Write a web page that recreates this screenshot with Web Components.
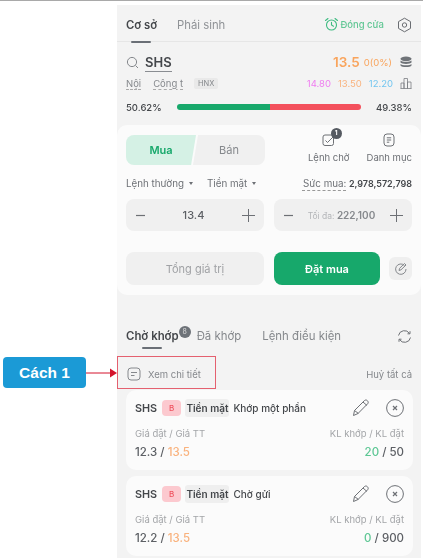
<!DOCTYPE html>
<html>
<head>
<meta charset="utf-8">
<style>
    html, body { margin: 0; padding: 0; background: #fff; }
    body { width: 423px; height: 558px; overflow: hidden; font-family: Inter, "Noto Sans", sans-serif; }
</style>
</head>
<body>
<trade-screen>
    <market-header></market-header>
    <order-form></order-form>
    <order-tabs></order-tabs>
    <order-card status="Khớp một phần" price="12.3" filled="20" total="50"></order-card>
    <order-card status="Chờ gửi" price="12.2" filled="0" total="900"></order-card>
</trade-screen>
<callout-label></callout-label>

<script>
class TradeScreen extends HTMLElement {
    constructor() {
        super()
        this.attachShadow({ mode: 'open' })
    }

    connectedCallback() {
        this.shadowRoot.innerHTML = `
            <style>
                :host {
                    display: block;
                    box-sizing: border-box;
                    width: 423px;
                    height: 558px;
                    overflow: hidden;
                    border-top: 1px solid #a9a9a9;
                    padding: 4px 2px 0 117px;
                }
                .panel {
                    display: flex;
                    flex-direction: column;
                    height: 560px;
                    background: #f3f3f3;
                    color: #44474b;
                    filter: blur(0.45px);
                }
            </style>
            <div class="panel"><slot></slot></div>
        `
    }
}

class MarketHeader extends HTMLElement {
    constructor() {
        super()
        this.attachShadow({ mode: 'open' })
    }

    connectedCallback() {
        this.shadowRoot.innerHTML = `
            <style>
                :host { display: block; height: 120px; font-size: 9px; }
                .tabs {
                    display: flex;
                    align-items: center;
                    gap: 20px;
                    box-sizing: border-box;
                    height: 37px;
                    padding: 3px 9px 0;
                    border-bottom: 1px solid #e6e6e6;
                    font-size: 11.3px;
                }
                .tab { position: relative; color: #8f9296; }
                .tab.on { color: #44474b; font-weight: 600; }
                .tab.on::after {
                    content: '';
                    position: absolute;
                    left: 5px;
                    bottom: -11px;
                    width: 20px;
                    height: 2px;
                    border-radius: 1px;
                    background: #6a6f76;
                }
                .closed {
                    display: flex;
                    align-items: center;
                    gap: 1px;
                    margin-left: auto;
                    color: #62c795;
                    font-size: 9.5px;
                    font-weight: 500;
                }
                .row {
                    display: flex;
                    align-items: center;
                    padding: 0 9px;
                }
                .symbol { height: 30px; margin-top: 5px; }
                .symbol b {
                    margin-left: 6px;
                    font-size: 13px;
                    font-weight: 600;
                    line-height: 18px;
                    border-bottom: 1px solid #8a8d92;
                }
                .last { margin-left: auto; color: #f9a45c; font-size: 13.5px; font-weight: 600; }
                .chg { margin: 0 8px 0 4px; color: #f9a45c; font-size: 9.5px; }
                .info { height: 12px; color: #85888c; font-size: 9.5px; }
                .info u { text-decoration: underline dashed #aaa; text-underline-offset: 2px; }
                .info .gap { width: 12px; }
                .hnx {
                    margin-left: 11px;
                    padding: 1px 4px;
                    border-radius: 2px;
                    background: #e9e9e9;
                    font-size: 7.5px;
                }
                .ceil { margin-left: auto; color: #ef7bf0; }
                .ref { margin: 0 7px; color: #f9b27d; }
                .floor { margin-right: 7px; color: #71c5f0; }
                .ratio { height: 16px; margin-top: 10px; font-size: 9.5px; font-weight: 500; }
                .bar {
                    display: flex;
                    flex: 1;
                    height: 6px;
                    margin: 0 15px;
                    overflow: hidden;
                    border-radius: 3px;
                }
                .buy { width: 50.62%; background: #17a86b; }
                .sell { flex: 1; background: #f3505c; }
            </style>
            <div class="tabs">
                <span class="tab on">Cơ sở</span>
                <span class="tab">Phái sinh</span>
                <span class="closed">
                    <svg width="15" height="15" viewBox="0 0 15 15" fill="none" stroke="#3dbb80" stroke-width="1.1">
                        <circle cx="7.5" cy="8" r="5"/>
                        <path d="M7.5 5.2V8l2 1.2M1.5 3.5l2.5-2M13.5 3.5l-2.5-2" stroke-linecap="round"/>
                    </svg>
                    Đóng cửa
                </span>
                <svg style="margin-left:-7px" width="15" height="16" viewBox="0 0 15 16" fill="none" stroke="#6a6d72" stroke-width="1">
                    <path d="M7.5 1.2l6 3.4v6.8l-6 3.4-6-3.4V4.6z"/>
                    <circle cx="7.5" cy="8" r="2.2"/>
                </svg>
            </div>
            <div class="row symbol">
                <svg width="13" height="13" viewBox="0 0 13 13" fill="none" stroke="#85888c" stroke-width="1">
                    <circle cx="6" cy="6" r="4.6"/><path d="M9.5 9.5l2.5 2.5"/>
                </svg>
                <b>SHS</b>
                <span class="last">13.5</span>
                <span class="chg">0(0%)</span>
                <svg width="12" height="12" viewBox="0 0 12 12" fill="#6f7378">
                    <ellipse cx="6" cy="2.8" rx="5.5" ry="2.3"/>
                    <path d="M.5 4.4c1 1.7 10 1.7 11 0v2.2c-1 1.8-10 1.8-11 0zM.5 8c1 1.7 10 1.7 11 0v1.5c-1 2-10 2-11 0z"/>
                </svg>
            </div>
            <div class="row info">
                <u>Nội</u><span class="gap"></span><u>Công t</u>
                <span class="hnx">HNX</span>
                <span class="ceil">14.80</span>
                <span class="ref">13.50</span>
                <span class="floor">12.20</span>
                <svg width="12" height="12" viewBox="0 0 12 12" fill="none" stroke="#7b7e83" stroke-width=".8">
                    <path d="M.5 11.5h11M1 11.5V6h3v5.5M4 11.5V1.5h3.5v10M7.5 11.5V5H11v6.5"/>
                </svg>
            </div>
            <div class="row ratio">
                <span>50.62%</span>
                <span class="bar"><span class="buy"></span><span class="sell"></span></span>
                <span>49.38%</span>
            </div>
        `
    }
}

class OrderForm extends HTMLElement {
    constructor() {
        super()
        this.attachShadow({ mode: 'open' })
    }

    connectedCallback() {
        this.shadowRoot.innerHTML = `
            <style>
                :host {
                    display: flex;
                    flex-direction: column;
                    box-sizing: border-box;
                    height: 170px;
                    padding: 10px 9px 0;
                    border-radius: 10px;
                    background: #fbfbfb;
                    font-size: 9px;
                }
                .top { display: flex; height: 38px; }
                .switch { display: flex; width: 139px; height: 30px; }
                .switch span {
                    display: flex;
                    align-items: center;
                    justify-content: center;
                    font-size: 11px;
                }
                .mua {
                    width: 70px;
                    border-radius: 8px 0 0 8px;
                    background: #d5f1e5;
                    color: #17a86b;
                    font-weight: 600;
                    clip-path: polygon(0 0, 100% 0, 93% 100%, 0 100%);
                }
                .ban {
                    flex: 1;
                    margin-left: -3px;
                    border-radius: 0 8px 8px 0;
                    background: #f0f0f0;
                    color: #85888c;
                    clip-path: polygon(7% 0, 100% 0, 100% 100%, 0 100%);
                }
                .links { display: flex; gap: 17px; margin-left: auto; margin-top: -2px; }
                .link {
                    position: relative;
                    display: flex;
                    flex-direction: column;
                    align-items: center;
                    gap: 5px;
                    color: #6d7075;
                    font-size: 9.5px;
                }
                .badge {
                    position: absolute;
                    top: -5px;
                    right: 8px;
                    width: 11px;
                    height: 11px;
                    border-radius: 50%;
                    background: #555a61;
                    color: #fff;
                    font-size: 6.5px;
                    font-weight: 700;
                    line-height: 11px;
                    text-align: center;
                }
                .options {
                    display: flex;
                    align-items: center;
                    gap: 14px;
                    height: 16px;
                    margin-top: 2px;
                    color: #6d7075;
                    font-size: 9.8px;
                }
                .options i {
                    display: inline-block;
                    margin-left: 5px;
                    border: 2.5px solid transparent;
                    border-top: 3px solid #6d7075;
                    border-bottom: 0;
                    vertical-align: middle;
                }
                .power { margin-left: auto; font-size: 9px; white-space: nowrap; }
                .power u { font-size: 9.8px; text-decoration: underline dashed #999; text-underline-offset: 3px; }
                .power b { color: #44474b; font-weight: 600; }
                .inputs, .submit { display: grid; grid-template-columns: 138px 1fr; gap: 10px; }
                .inputs { margin-top: 8px; }
                .stepper {
                    display: flex;
                    align-items: center;
                    justify-content: space-between;
                    box-sizing: border-box;
                    height: 32px;
                    padding: 0 9px 0 10px;
                    border-radius: 8px;
                    background: #f0f0f0;
                    color: #5d6065;
                    font-size: 11px;
                    font-weight: 500;
                }
                .stepper svg { flex: none; }
                .hint { color: #b3b5b8; font-size: 8.5px; font-weight: 400; }
                .hint b { color: #85888c; font-size: 10px; font-weight: 600; }
                .submit { margin-top: 21px; }
                .total, .place {
                    display: flex;
                    align-items: center;
                    justify-content: center;
                    height: 33px;
                    border-radius: 8px;
                    font-size: 11px;
                }
                .total { background: #f0f0f0; color: #a0a2a5; }
                .actions { display: flex; justify-content: space-between; align-items: flex-start; }
                .place { width: 106px; background: #17a86b; color: #fff; font-weight: 600; }
                .edit {
                    display: flex;
                    align-items: center;
                    justify-content: center;
                    width: 23px;
                    height: 23px;
                    margin-top: 5px;
                    border-radius: 6px;
                    background: #efefef;
                }
            </style>
            <div class="top">
                <div class="switch"><span class="mua">Mua</span><span class="ban">Bán</span></div>
                <div class="links">
                    <div class="link">
                        <svg width="14" height="14" viewBox="0 0 14 14" fill="none" stroke="#6d7075" stroke-width="1">
                            <rect x="1" y="2" width="10.5" height="10.5" rx="2"/>
                            <path d="M3.5 7.5l2 2L11 4"/>
                        </svg>
                        <span class="badge">1</span>
                        <span>Lệnh chờ</span>
                    </div>
                    <div class="link">
                        <svg width="14" height="14" viewBox="0 0 14 14" fill="none" stroke="#6d7075" stroke-width="1">
                            <rect x="2" y="1" width="10" height="12" rx="3"/>
                            <path d="M4.8 4.8h4.4M4.8 7h4.4M4.8 9.2h2.5"/>
                        </svg>
                        <span>Danh mục</span>
                    </div>
                </div>
            </div>
            <div class="options">
                <span>Lệnh thường<i></i></span>
                <span>Tiền mặt<i></i></span>
                <span class="power"><u>Sức mua:</u> <b>2,978,572,798</b></span>
            </div>
            <div class="inputs">
                <div class="stepper">
                    <svg width="9" height="9" viewBox="0 0 9 9" stroke="#6d7075" stroke-width="1.2"><path d="M0 4.5h9"/></svg>
                    <span>13.4</span>
                    <svg width="13" height="13" viewBox="0 0 13 13" stroke="#6d7075" stroke-width="1"><path d="M0 6.5h13M6.5 0v13"/></svg>
                </div>
                <div class="stepper">
                    <svg width="9" height="9" viewBox="0 0 9 9" stroke="#6d7075" stroke-width="1.2"><path d="M0 4.5h9"/></svg>
                    <span class="hint">Tối đa: <b>222,100</b></span>
                    <svg width="13" height="13" viewBox="0 0 13 13" stroke="#6d7075" stroke-width="1"><path d="M0 6.5h13M6.5 0v13"/></svg>
                </div>
            </div>
            <div class="submit">
                <div class="total">Tổng giá trị</div>
                <div class="actions">
                    <div class="place">Đặt mua</div>
                    <div class="edit">
                        <svg width="13" height="13" viewBox="0 0 13 13" fill="none" stroke="#85888c" stroke-width="1">
                            <path d="M10.5 3.5A5.2 5.2 0 1 0 12 7M5 8.5l.6-2.2L10.5 1.5l1.5 1.5-5 4.8z"/>
                        </svg>
                    </div>
                </div>
            </div>
        `
    }
}

class OrderTabs extends HTMLElement {
    constructor() {
        super()
        this.attachShadow({ mode: 'open' })
    }

    connectedCallback() {
        this.shadowRoot.innerHTML = `
            <style>
                :host { display: block; height: 95px; padding: 0 9px; font-size: 11.4px; }
                .tabs { display: flex; align-items: center; height: 34px; margin-top: 24px; color: #85888c; }
                .tab { position: relative; }
                .on { color: #44474b; font-weight: 600; }
                .on::after {
                    content: '';
                    position: absolute;
                    left: 16px;
                    bottom: -6px;
                    width: 20px;
                    height: 2px;
                    border-radius: 1px;
                    background: #6a6f76;
                }
                .count {
                    width: 12px;
                    height: 12px;
                    margin: -8px 6px 0 0;
                    border-radius: 50%;
                    background: #6d7278;
                    color: #ddd;
                    font-size: 7px;
                    line-height: 12px;
                    text-align: center;
                }
                .tabs svg { margin-left: auto; }
                .detail {
                    display: flex;
                    align-items: center;
                    height: 20px;
                    margin-top: 11px;
                    color: #85888c;
                    font-size: 9.5px;
                }
                .detail svg { margin: 0 7px 0 1px; }
                .detail span:last-child { margin-left: auto; }
            </style>
            <div class="tabs">
                <span class="tab on">Chờ khớp</span>
                <span class="count">8</span>
                <span class="tab">Đã khớp</span>
                <span class="tab" style="margin-left:21px">Lệnh điều kiện</span>
                <svg width="15" height="15" viewBox="0 0 15 15" fill="none" stroke="#6d7075" stroke-width="1">
                    <path d="M1.5 6.5A6 6 0 0 1 12.5 4.5M13.5 8.5A6 6 0 0 1 2.5 10.5M10.5 4.8H13V2.2M4.5 10.2H2v2.6"/>
                </svg>
            </div>
            <div class="detail">
                <svg width="14" height="14" viewBox="0 0 14 14" fill="none" stroke="#85888c" stroke-width="1">
                    <rect x="1" y="1" width="12" height="12" rx="3"/>
                    <path d="M4 5.5h6M4 8.5h3.5"/>
                </svg>
                <span>Xem chi tiết</span>
                <span>Huỷ tất cả</span>
            </div>
        `
    }
}

class OrderCard extends HTMLElement {
    constructor() {
        super()
        this.attachShadow({ mode: 'open' })
    }

    connectedCallback() {
        const status = this.getAttribute('status')
        const price = this.getAttribute('price')
        const filled = this.getAttribute('filled')
        const total = this.getAttribute('total')
        this.shadowRoot.innerHTML = `
            <style>
                :host {
                    display: block;
                    box-sizing: border-box;
                    flex: none;
                    width: 287px;
                    height: 80px;
                    margin: 0 0 6px 9px;
                    padding: 8px 9px 0;
                    border-radius: 10px;
                    background: #fbfbfb;
                    font-size: 10px;
                }
                .head { display: flex; align-items: center; height: 20px; font-weight: 500; }
                .name { font-size: 10.8px; font-weight: 600; }
                .side {
                    margin: 0 4px 0 5px;
                    padding: 3px 7px;
                    border-radius: 4px;
                    background: #fcc9cf;
                    color: #ef5360;
                    font-size: 8px;
                }
                .kind {
                    margin-right: 4px;
                    padding: 3px 1px;
                    border-radius: 3px;
                    background: #efefef;
                    font-weight: 600;
                }
                .head svg:first-of-type { margin-left: auto; }
                .head svg:last-of-type { margin-left: 16px; }
                .labels, .values { display: flex; justify-content: space-between; }
                .labels { margin-top: 10px; color: #a3a5a8; font-size: 9.5px; }
                .values { margin-top: 6px; font-size: 11.5px; font-weight: 500; color: #5d6065; }
                .market { color: #f9b27d; }
                .filled { color: #5dc794; }
            </style>
            <div class="head">
                <span class="name">SHS</span>
                <span class="side">B</span>
                <span class="kind">Tiền mặt</span>
                <span>${status}</span>
                <svg width="18" height="18" viewBox="0 0 18 18" fill="none" stroke="#6d7075" stroke-width="1">
                    <path d="M1.5 16.5l1-5L12.5 1.5c1-.8 2.2-.6 3 .3s1 2 .2 2.9L6 14.5zM2.5 11.5l4 3M11 3l4 3.5"/>
                </svg>
                <svg width="18" height="18" viewBox="0 0 18 18" fill="none" stroke="#6d7075" stroke-width="1">
                    <circle cx="9" cy="9" r="8.4"/>
                    <path d="M7 7l4 4M11 7l-4 4" stroke-width="1.2"/>
                </svg>
            </div>
            <div class="labels"><span>Giá đặt / Giá TT</span><span>KL khớp / KL đặt</span></div>
            <div class="values">
                <span>${price} / <span class="market">13.5</span></span>
                <span><span class="filled">${filled}</span> / ${total}</span>
            </div>
        `
    }
}

class CalloutLabel extends HTMLElement {
    constructor() {
        super()
        this.attachShadow({ mode: 'open' })
    }

    connectedCallback() {
        this.shadowRoot.innerHTML = `
            <style>
                :host {
                    position: absolute;
                    left: 3px;
                    top: 356px;
                    display: flex;
                    align-items: center;
                    width: 213px;
                    height: 33px;
                }
                .label {
                    display: flex;
                    align-items: center;
                    justify-content: center;
                    width: 83px;
                    height: 31px;
                    border-radius: 4px;
                    background: #1b9ad6;
                    color: #fff;
                    font-family: "Liberation Sans", Arial, sans-serif;
                    font-size: 15.5px;
                    font-weight: 700;
                }
                svg { flex: none; }
                .box {
                    box-sizing: border-box;
                    width: 99px;
                    height: 33px;
                    border: 1px solid #e4606f;
                }
            </style>
            <div class="label">Cách 1</div>
            <svg width="31" height="12" viewBox="0 0 31 12">
                <path d="M0 6h25" stroke="#d4132c" stroke-width="1"/>
                <path d="M24 1.5L31 6l-7 4.5z" fill="#d4132c"/>
            </svg>
            <div class="box"></div>
        `
    }
}

customElements.define('trade-screen', TradeScreen)
customElements.define('market-header', MarketHeader)
customElements.define('order-form', OrderForm)
customElements.define('order-tabs', OrderTabs)
customElements.define('order-card', OrderCard)
customElements.define('callout-label', CalloutLabel)
</script>
</body>
</html>
